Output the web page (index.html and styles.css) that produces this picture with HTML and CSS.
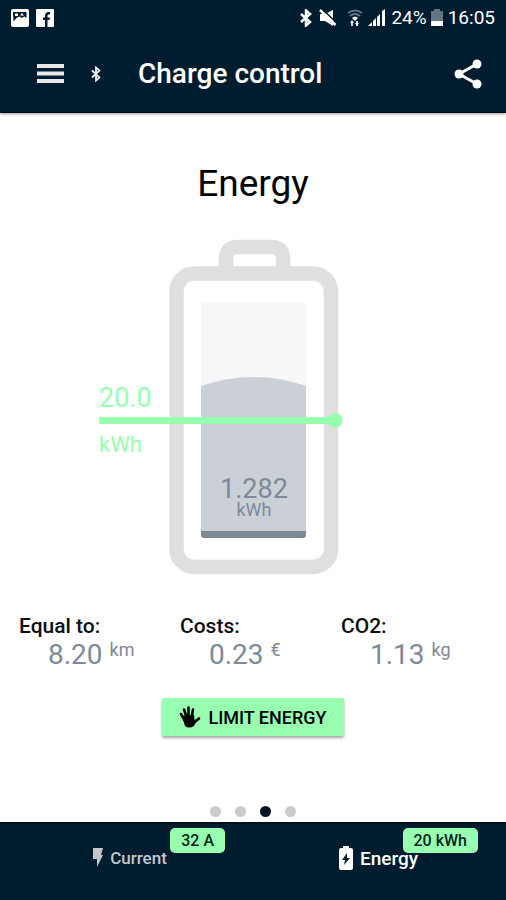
FILE: index.html
```html
<!DOCTYPE html>
<html lang="en">
<head>
<meta charset="utf-8">
<meta name="viewport" content="width=device-width, initial-scale=1">
<title>Charge control</title>
<link rel="stylesheet" href="styles.css">
</head>
<body>
<header class="top">
  <div class="status">
    <svg class="status-icon" width="18" height="18" viewBox="0 0 18 18" aria-hidden="true"><rect width="18" height="18" rx="2" fill="#fff"/><path d="M2 3h13.500v6l-2-1.500-3 1.500-1.500-1.500-3 1-3.500 4z" fill="#001c2f"/><path d="M4 4.500h3v2.500H4zM9 6.500l2-2.500 2 2.500z" fill="#fff"/></svg>
    <svg class="status-icon" width="18" height="18" viewBox="0 0 18 18" aria-hidden="true"><rect width="18" height="18" rx="1" fill="#fff"/><path d="M9 18v-7H7V8.500h2V7c0-2.700 1.300-4 4-4h1v2.500h-1c-1.200 0-1.500.5-1.500 1.500v1.500H14L13.500 11h-2v7z" fill="#001c2f"/></svg>
    <span class="spacer"></span>
    <svg width="12" height="18" viewBox="0 0 12 18" fill="none" stroke="#fff" stroke-width="2.500" aria-hidden="true"><path d="M1 5l9 8-4 3.500v-15L10 5l-9 8"/></svg>
    <svg class="mute" width="18" height="18" viewBox="0 0 18 18" aria-hidden="true"><path d="M1 5h5l8-4v16l-8-5H1z" fill="#fff"/><path d="M3 0l15 14" stroke="#001c2f" stroke-width="1.500"/><path d="M1 1l15.500 15" stroke="#fff" stroke-width="2.500"/></svg>
    <svg class="wifi" width="16" height="18" viewBox="0 0 16 18" aria-hidden="true"><path d="M1 4q7-5 14 0M3 7q5-4 10 0" stroke="#637482" stroke-width="2" fill="none"/><path d="M5 9q3-3 6 0l-3 3z" fill="#fff"/><path d="M5 12v5M10 17v-5" stroke="#cbd1d5" stroke-width="2"/><path d="M3 14l2-3 2 3zM8 14l2 3 2-3z" fill="#fff"/></svg>
    <svg class="signal" width="18" height="18" viewBox="0 0 18 18" fill="#fff" aria-hidden="true"><path d="M0 17l4-4v4zM5 12l3-3v8H5zM9 8l3-3v12H9zM14 2l3-2v17h-3z"/></svg>
    <span class="status-text">24%</span>
    <svg class="cell" width="12" height="18" viewBox="0 0 12 18" aria-hidden="true"><path d="M3 0h6v2h3v11H0V2h3z" fill="#637482"/><path d="M0 12h12v5H0z" fill="#fff"/></svg>
    <time class="status-text">16:05</time>
  </div>
  <div class="toolbar">
    <button class="icon-button" type="button" aria-label="Menu"><svg width="27" height="20" viewBox="0 0 27 20" fill="#e8e8e8"><path d="M0 0h27v4H0zM0 7.500h27v4H0zM0 15h27v4H0z"/></svg></button>
    <svg class="bt" width="10" height="16" viewBox="0 0 10 16" fill="none" stroke="#e8eef2" stroke-width="1.800" aria-hidden="true"><path d="M1 4.500l7.500 7L5 14.500v-13l3.500 3-7.500 7"/></svg>
    <h1 class="title">Charge control</h1>
    <button class="icon-button" type="button" aria-label="Share"><svg width="28" height="30" viewBox="0 0 28 30"><path d="M23 5L5 15l18 10" fill="none" stroke="#fff" stroke-width="3"/><g fill="#fff"><circle cx="23" cy="5" r="4.500"/><circle cx="5" cy="15" r="4.500"/><circle cx="23" cy="25" r="4.500"/></g></svg></button>
  </div>
</header>

<main class="content">
  <h2 class="heading">Energy</h2>
  <svg class="gauge" width="316" height="340" viewBox="0 0 316 340">
    <g fill="none" stroke="#dfdfdf" stroke-width="14.500">
      <path d="M131 36V22q0-12 12-12h33q12 0 12 12v14"/>
      <rect x="81.500" y="36.500" width="154.500" height="293.500" rx="18"/>
    </g>
    <rect x="106" y="66" width="105" height="235" rx="3" fill="#f7f7f7"/>
    <path d="M106 149q52.500-18 105 0v146H106z" fill="#cbd0d6"/>
    <path d="M106 294h105v4q0 3-3 3h-99q-3 0-3-3z" fill="#7e8997"/>
    <path d="M4 183.500h236" stroke="#99ffb0" stroke-width="7"/>
    <circle cx="240" cy="183.500" r="7.500" fill="#99ffb0"/>
    <text class="limit-value" x="4" y="170">20.0</text>
    <text class="limit-unit" x="4" y="215">kWh</text>
    <text class="charge-value" x="159" y="261">1.282</text>
    <text class="charge-unit" x="159" y="279">kWh</text>
  </svg>
  <dl class="stats">
    <div><dt>Equal to:</dt><dd>8.20 <span class="unit">km</span></dd></div>
    <div><dt>Costs:</dt><dd>0.23 <span class="unit">€</span></dd></div>
    <div><dt>CO2:</dt><dd>1.13 <span class="unit">kg</span></dd></div>
  </dl>
  <button class="limit" type="button">
    <svg width="22" height="22" viewBox="0 0 22 22" aria-hidden="true"><g fill="none" stroke="#000" stroke-width="2.600" stroke-linecap="round"><path d="M2 8l4 7M5 3.500l3 9M9.500 1.500V12M14 3.500l-1.500 9M20 12.500l-5 4"/></g><path d="M3 10l12-1 .5 5 3-1-3.500 7q-5 3-9 0z"/></svg>
    <span>LIMIT ENERGY</span>
  </button>
  <div class="dots" aria-hidden="true"><i></i><i></i><i class="on"></i><i></i></div>
</main>

<nav class="tabs">
  <a class="tab" href="#current"><svg width="12" height="20" viewBox="0 0 12 20" fill="#c4c7ca" aria-hidden="true"><path d="M1 0h10L9 7h2L5 19v-8H1z"/></svg><span>Current</span><span class="badge">32 A</span></a>
  <a class="tab active" href="#energy"><svg width="14" height="26" viewBox="0 0 14 26" aria-hidden="true"><path d="M4 1h6v2h2q2 0 2 2v18q0 2-2 2H2q-2 0-2-2V5q0-2 2-2h2z" fill="#fff"/><path d="M8 8l-5 7h3l-1 5 6-7H8z" fill="#001c2f"/></svg><span>Energy</span><span class="badge">20 kWh</span></a>
</nav>
</body>
</html>
```
FILE: styles.css
```css
* { box-sizing: border-box; }

body {
  margin: 0;
  min-height: 100vh;
  display: flex;
  flex-direction: column;
  background: #fff;
  color: #0c0f12;
  font-family: Roboto, "Liberation Sans", sans-serif;
}

svg { display: block; flex: none; }

button {
  border: 0;
  background: none;
  padding: 0;
  font: inherit;
  color: inherit;
}

.top {
  background: #001c2f;
  color: #fff;
  border-bottom: 1px solid #000a14;
  box-shadow: 0 1px 3px rgba(0, 0, 0, 0.4);
}

.status {
  display: flex;
  align-items: center;
  height: 36px;
  padding: 0 11px;
}

.status-icon { margin-right: 8px; }
.status-icon:first-child { margin-right: 7px; }
.spacer { flex: 1; }
.mute { margin-left: 7px; }
.wifi { margin-left: 10px; }
.signal { margin-left: 5px; }

.status-text {
  margin-left: 5px;
  font-size: 19px;
  line-height: 36px;
}

.cell { margin-left: 4px; }

.toolbar {
  display: flex;
  align-items: center;
  height: 76px;
  padding: 0 24px 0 37px;
}

.bt { margin-left: 27px; }

.title {
  flex: 1;
  margin: 0 0 0 37px;
  font-size: 28px;
  font-weight: 500;
  line-height: 36px;
}

.content {
  flex: 1;
  display: flex;
  flex-direction: column;
  align-items: center;
  padding-top: 49px;
}

.heading {
  margin: 0;
  font-size: 37px;
  font-weight: 400;
  line-height: 44px;
  color: #000;
}

.gauge { margin-top: 31px; }
.gauge text { font-family: Roboto, "Liberation Sans", sans-serif; }
.limit-value { font-size: 27px; fill: #99ffb0; }
.limit-unit { font-size: 22px; fill: #99ffb0; }
.charge-value { font-size: 27px; fill: #7e8997; text-anchor: middle; }
.charge-unit { font-size: 18px; fill: #7e8997; text-anchor: middle; }

.stats {
  align-self: stretch;
  display: grid;
  grid-template-columns: repeat(3, 1fr);
  margin: 36px 0 0;
  padding: 0 4px 0 19px;
}

.stats dt {
  font-size: 21px;
  font-weight: 500;
  line-height: 26px;
}

.stats dd {
  display: flex;
  gap: 7px;
  margin: 0 0 0 29px;
  font-size: 28px;
  line-height: 32px;
  color: #7e8997;
}

.unit {
  font-size: 18px;
  line-height: 22px;
}

.limit {
  display: flex;
  align-items: center;
  gap: 7px;
  height: 38px;
  margin-top: 27px;
  padding: 0 17px;
  border-radius: 2px;
  background: #99ffb0;
  box-shadow: 0 2px 3px rgba(0, 0, 0, 0.35);
  font-size: 18px;
  font-weight: 500;
  color: #000;
}

.dots {
  display: flex;
  gap: 14px;
  margin-top: auto;
  padding-bottom: 5px;
}

.dots i {
  width: 11px;
  height: 11px;
  border-radius: 50%;
  background: #ccc;
}

.dots .on { background: #001322; }

.tabs {
  display: grid;
  grid-template-columns: 1fr 1fr;
  height: 78px;
  background: #001c2f;
  border-top: 2px solid #000f1e;
}

.tab {
  position: relative;
  display: flex;
  align-items: center;
  justify-content: center;
  gap: 6px;
  padding: 0 0 8px 6px;
  color: #c4c7ca;
  font-size: 17px;
  font-weight: 500;
  text-decoration: none;
}

.tab.active {
  gap: 7px;
  padding: 0 2px 8px 0;
  color: #fff;
  font-size: 19px;
}

.badge {
  position: absolute;
  top: 4px;
  right: 28px;
  padding: 0 11px;
  border-radius: 5px;
  background: #99ffb0;
  color: #06251c;
  font-size: 16px;
  line-height: 25px;
}
```
